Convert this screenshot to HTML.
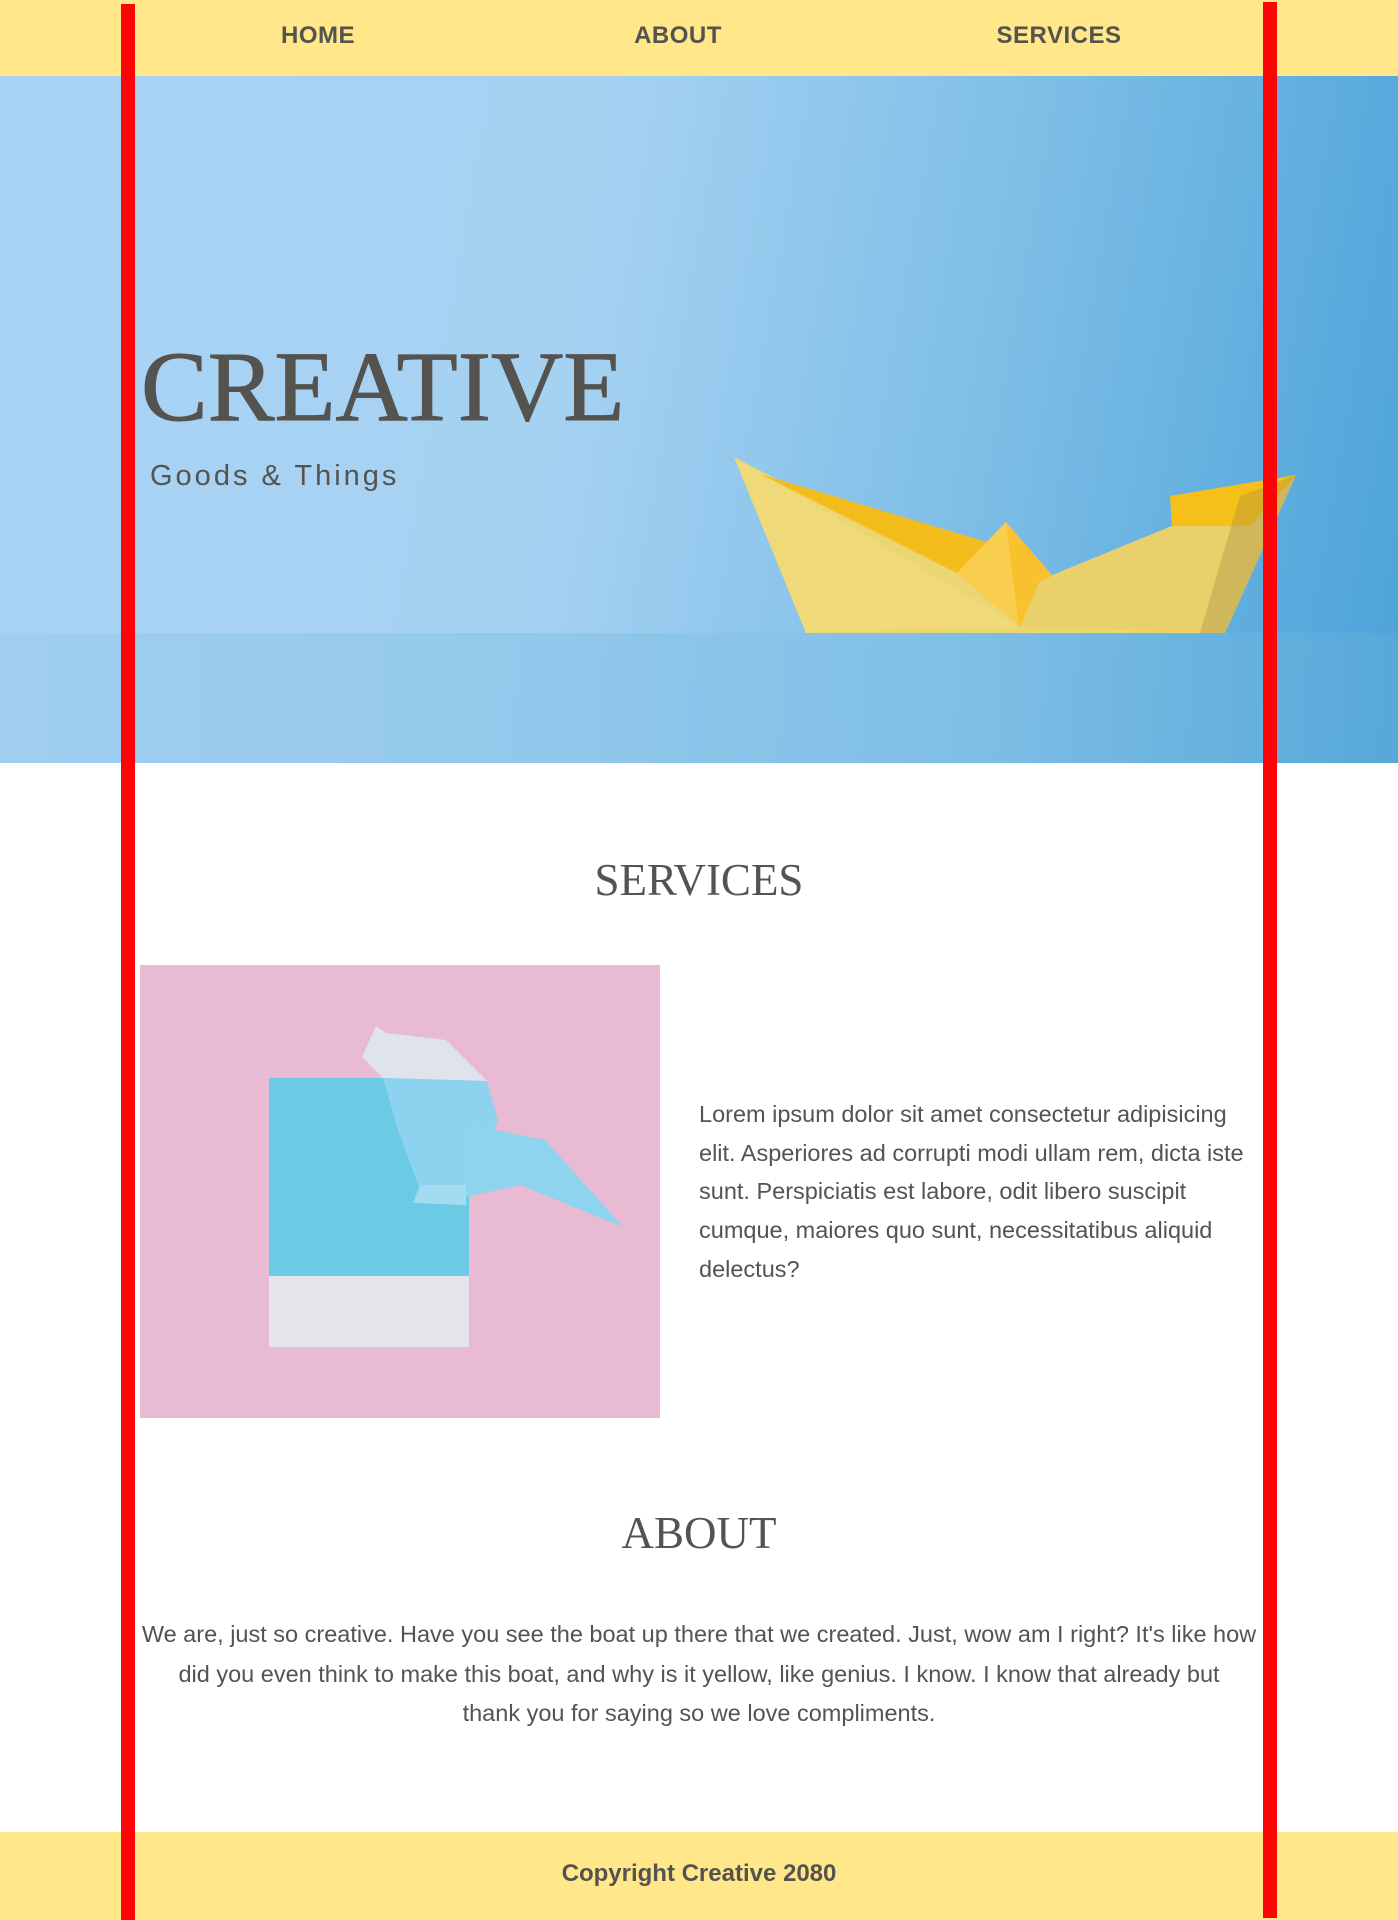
<!DOCTYPE html>
<html><head><meta charset="utf-8"><style>
*{margin:0;padding:0;box-sizing:border-box}
body{width:1398px;height:1920px;position:relative;background:#fff;font-family:"Liberation Sans",sans-serif;color:#55534f;overflow:hidden}
.nav{position:absolute;left:0;top:0;width:1398px;height:76px;background:#ffe78a}
.nav span{position:absolute;top:22px;font-weight:bold;font-size:24px;transform:translateX(-50%);letter-spacing:0.5px}
.hero{position:absolute;left:0;top:76px;width:1398px;height:687px;background:linear-gradient(100deg,#a9d3f5 0%,#a6d2f2 40%,#7cbde6 70%,#4ba3d9 100%)}
.red{position:absolute;top:4px;width:14px;height:1916px;background:#fc0506;z-index:5}
.serif{font-family:"Liberation Serif",serif}
.p{position:absolute;font-size:23.5px;white-space:nowrap}
</style></head><body>
<div class="nav">
<span style="left:318px">HOME</span>
<span style="left:678px">ABOUT</span>
<span style="left:1059px">SERVICES</span>
</div>
<div class="hero">
<svg width="1398" height="687" style="position:absolute;left:0;top:0">
<defs><linearGradient id="w" x1="0" y1="0" x2="1" y2="0"><stop offset="0" stop-color="#9dcdee"/><stop offset="0.7" stop-color="#80bfe6"/><stop offset="1" stop-color="#5aaad9"/></linearGradient></defs>
<polygon points="734,381 957,497 1006,446 1050,500 1296,399 1225,557 806,557" fill="#ecd673"/>
<polygon points="734,381 806,557 1020,551" fill="#efd978"/>
<polygon points="760,398 957,497 1000,470" fill="#f4bd1e"/>
<polygon points="957,497 1006,446 1070,520 1020,551" fill="#f9cd4e"/>
<polygon points="1006,446 1019,551 1070,520" fill="#f8c22f"/>
<polygon points="1040,505 1296,399 1225,557 1020,551" fill="#e9d06a"/>
<polygon points="1170,420 1296,399 1250,450 1172,450" fill="#f7bf1a"/>
<polygon points="1240,420 1296,399 1225,557 1200,557" fill="#a08d3f" opacity="0.35"/>
<rect x="0" y="557" width="1398" height="130" fill="url(#w)" opacity="0.75"/>
</svg>
</div>
<div style="position:absolute;left:141px;top:337px;font-size:100px;line-height:1;-webkit-text-stroke:1px #55534f" class="serif">CREATIVE</div>
<div style="position:absolute;left:150px;top:460px;font-size:29px;letter-spacing:3px">Goods &amp; Things</div>

<div class="serif" style="position:absolute;left:0;width:1398px;text-align:center;top:854px;font-size:45px">SERVICES</div>

<svg width="520" height="453" style="position:absolute;left:140px;top:965px">
<rect width="520" height="453" fill="#e9bad3"/>
<g transform="translate(-140,-965)">
<rect x="269" y="1078" width="200" height="198" fill="#6ccbe4"/>
<rect x="269" y="1276" width="200" height="71" fill="#e4e4e9"/>
<polygon points="376,1026 362,1057 383,1078 487,1081 446,1040 386,1033" fill="#dfe3ec"/>
<polygon points="383,1078 487,1081 498,1120 466,1197 420,1190 398,1130" fill="#8dd2ee"/>
<polygon points="470,1125 545,1140 623,1227 520,1185 466,1197" fill="#8fd4ee"/>
<polygon points="420,1185 466,1185 466,1205 413,1203" fill="#a3dbf1"/>
</g>
</svg>
<div class="p" style="left:699px;top:1095px;line-height:38.7px">Lorem ipsum dolor sit amet consectetur adipisicing<br>elit. Asperiores ad corrupti modi ullam rem, dicta iste<br>sunt. Perspiciatis est labore, odit libero suscipit<br>cumque, maiores quo sunt, necessitatibus aliquid<br>delectus?</div>

<div class="serif" style="position:absolute;left:0;width:1398px;text-align:center;top:1507px;font-size:45px">ABOUT</div>
<div class="p" style="left:0;width:1398px;text-align:center;top:1615px;line-height:39.5px">We are, just so creative. Have you see the boat up there that we created. Just, wow am I right? It's like how<br>did you even think to make this boat, and why is it yellow, like genius. I know. I know that already but<br>thank you for saying so we love compliments.</div>

<div style="position:absolute;left:0;top:1832px;width:1398px;height:88px;background:#ffe78a;text-align:center;font-weight:bold;font-size:24px;line-height:84px">Copyright Creative 2080</div>

<div class="red" style="left:121px"></div>
<div class="red" style="left:1263px;top:2px"></div>
</body></html>
